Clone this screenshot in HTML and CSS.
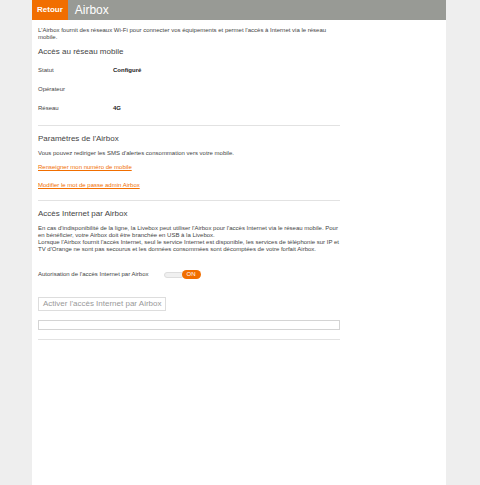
FILE: index.html
```html
<!DOCTYPE html>
<html lang="fr">
<head>
  <meta charset="UTF-8">
  <title>Airbox</title>
  <link rel="stylesheet" href="styles.css">
</head>
<body>
  <div class="page">
    <header class="header">
      <a class="back" href="#">Retour</a>
      <h1 class="title">Airbox</h1>
    </header>

    <main class="content">
      <p class="intro">L'Airbox fournit des réseaux Wi-Fi pour connecter vos équipements et permet l'accès à Internet via le réseau mobile.</p>

      <section class="section mobile">
        <h2>Accès au réseau mobile</h2>
        <dl class="info">
          <dt>Statut</dt>
          <dd>Configuré</dd>
          <dt>Opérateur</dt>
          <dd></dd>
          <dt>Réseau</dt>
          <dd>4G</dd>
        </dl>
      </section>

      <section class="section settings">
        <h2>Paramètres de l'Airbox</h2>
        <p>Vous pouvez rediriger les SMS d'alertes consommation vers votre mobile.</p>
        <a class="link" href="#">Renseigner mon numéro de mobile</a>
        <a class="link" href="#">Modifier le mot de passe admin Airbox</a>
      </section>

      <section class="section access">
        <h2>Accès Internet par Airbox</h2>
        <p>En cas d'indisponibilité de la ligne, la Livebox peut utiliser l'Airbox pour l'accès Internet via le réseau mobile. Pour en bénéficier, votre Airbox doit être branchée en USB à la Livebox.<br>
        Lorsque l'Airbox fournit l'accès Internet, seul le service Internet est disponible, les services de téléphonie sur IP et TV d'Orange ne sont pas secourus et les données consommées sont décomptées de votre forfait Airbox.</p>

        <div class="toggle-row">
          <label for="authorize">Autorisation de l'accès Internet par Airbox</label>
          <label class="switch">
            <input type="checkbox" id="authorize" checked>
            <span class="switch-label">ON</span>
          </label>
        </div>

        <button type="button" class="activate" disabled>Activer l'accès Internet par Airbox</button>
        <input type="text" class="message" aria-label="Message" readonly>
      </section>
    </main>
  </div>
</body>
</html>
```

FILE: styles.css
```css
* {
  box-sizing: border-box;
}

body {
  margin: 0;
  background-color: #eee;
  color: #444;
  font-family: Arial, "Liberation Sans", sans-serif;
  font-size: 6px;
  line-height: 7px;
}

.page {
  min-height: 100vh;
  margin: 0 34px 0 32px;
  background-color: #fff;
}

.header {
  display: flex;
  height: 20px;
  background-color: #989a95;
  color: #fff;
  line-height: 20px;
}

.back {
  padding: 0 5px;
  background-color: #f16e00;
  color: #fff;
  font-size: 8px;
  font-weight: bold;
  text-decoration: none;
}

.title {
  margin: 0 0 0 7px;
  font-size: 12px;
  font-weight: normal;
}

.content {
  max-width: 308px;
  padding: 7px 0 0 6px;
}

p {
  margin: 0;
}

h2 {
  margin: 0;
  font-size: 8px;
  font-weight: normal;
  line-height: 10px;
}

.section {
  padding-top: 8px;
  border-bottom: 1px solid #e2e2e2;
}

.mobile {
  padding-top: 6px;
  padding-bottom: 13px;
}

.info {
  display: grid;
  grid-template-columns: 75px 1fr;
  grid-auto-rows: 7px;
  row-gap: 12px;
  margin: 10px 0 0;
}

.info dd {
  margin: 0;
  color: #222;
  font-weight: bold;
}

.settings {
  padding-bottom: 11px;
}

.section p {
  margin-top: 6px;
}

.link {
  display: table;
  margin-top: 7px;
  color: #f16e00;
}

.link + .link {
  margin-top: 11px;
}

.access {
  padding-bottom: 9px;
}

.toggle-row {
  display: flex;
  align-items: center;
  gap: 15px;
  margin-top: 17px;
}

.switch {
  display: flex;
  align-items: center;
}

.switch input {
  appearance: none;
  width: 20px;
  height: 6px;
  margin: 0 -2px 0 0;
  border: 1px solid #ddd;
  border-radius: 3px;
  background-color: #f0f0f0;
}

.switch-label {
  z-index: 1;
  width: 19px;
  border-radius: 5px;
  background-color: #f16e00;
  color: #fff;
  line-height: 9px;
  text-align: center;
}

.activate {
  display: block;
  margin-top: 18px;
  padding: 0 4px;
  border: 1px solid #ddd;
  background-color: #fff;
  color: #999;
  font-family: inherit;
  font-size: 8px;
  line-height: 12px;
}

.message {
  display: block;
  width: 100%;
  height: 10px;
  margin-top: 9px;
  padding: 0 4px;
  border: 1px solid #d4d4d4;
  background-color: #fff;
  font: inherit;
}
```
